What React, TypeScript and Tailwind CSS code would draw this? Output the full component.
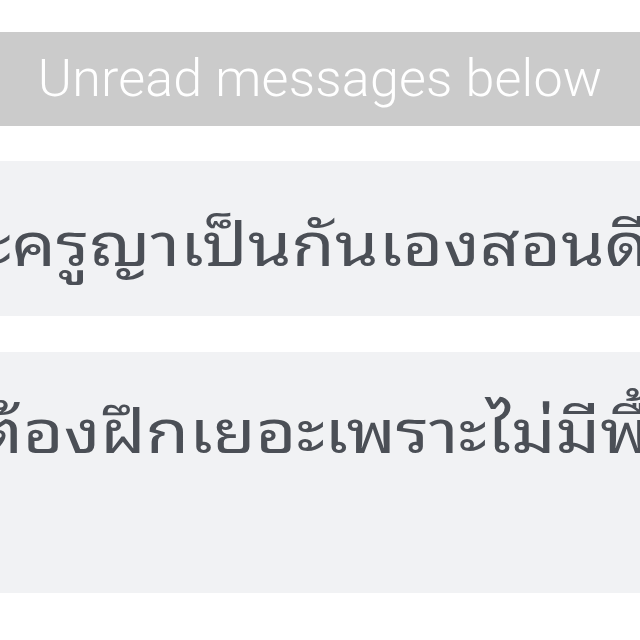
export default function App() {
  return (
    <div className="w-[640px] h-[640px] overflow-hidden bg-white flex flex-col">
      <div className="mt-[32px] h-[94px] shrink-0 bg-[#cbcbcb] flex items-center justify-center">
        <span
          className="text-white text-[52px] font-light leading-none tracking-[0.2px]"
          style={{ fontFamily: "Roboto, 'Liberation Sans', sans-serif" }}
        >
          Unread messages below
        </span>
      </div>
      <div className="mt-[35px] h-[155px] shrink-0 bg-[#f1f2f4] flex items-center overflow-hidden">
        <span
          className="ml-[-17px] mt-[2px] whitespace-nowrap text-[#4b4f56] text-[59px] leading-none origin-left scale-x-[1.19]"
          style={{ fontFamily: "'Noto Sans Thai Looped', 'Noto Sans Thai UI', sans-serif" }}
        >
          ะครูญาเป็นกันเองสอนดีมาก
        </span>
      </div>
      <div className="mt-[36px] h-[241px] shrink-0 bg-[#f1f2f4] flex items-start overflow-hidden">
        <span
          className="mt-[45px] ml-[-22px] whitespace-nowrap text-[#4b4f56] text-[59px] leading-none origin-left scale-x-[1.19]"
          style={{ fontFamily: "'Noto Sans Thai Looped', 'Noto Sans Thai UI', sans-serif" }}
        >
          ต้องฝึกเยอะเพราะไม่มีพื้นฐาน
        </span>
      </div>
    </div>
  );
}
